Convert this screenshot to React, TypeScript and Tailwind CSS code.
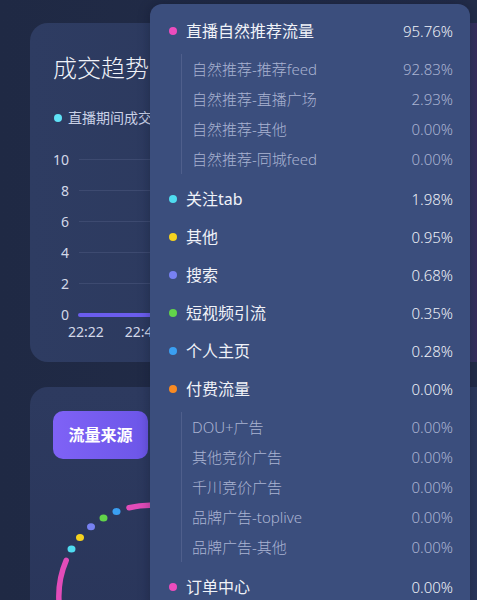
import React from 'react';

type Sub = { name: string; value: string };
type Source = { name: string; value: string; color: string; subs?: Sub[] };

const sources: Source[] = [
  {
    name: '直播自然推荐流量',
    value: '95.76%',
    color: 'bg-[#ec4cbd]',
    subs: [
      { name: '自然推荐-推荐feed', value: '92.83%' },
      { name: '自然推荐-直播广场', value: '2.93%' },
      { name: '自然推荐-其他', value: '0.00%' },
      { name: '自然推荐-同城feed', value: '0.00%' },
    ],
  },
  { name: '关注tab', value: '1.98%', color: 'bg-[#4fdcf0]' },
  { name: '其他', value: '0.95%', color: 'bg-[#f5d21f]' },
  { name: '搜索', value: '0.68%', color: 'bg-[#7781f2]' },
  { name: '短视频引流', value: '0.35%', color: 'bg-[#62d44a]' },
  { name: '个人主页', value: '0.28%', color: 'bg-[#3a9ff2]' },
  {
    name: '付费流量',
    value: '0.00%',
    color: 'bg-[#f98a22]',
    subs: [
      { name: 'DOU+广告', value: '0.00%' },
      { name: '其他竞价广告', value: '0.00%' },
      { name: '千川竞价广告', value: '0.00%' },
      { name: '品牌广告-toplive', value: '0.00%' },
      { name: '品牌广告-其他', value: '0.00%' },
    ],
  },
  { name: '订单中心', value: '0.00%', color: 'bg-[#ec4cbd]' },
];

const yTicks = ['10', '8', '6', '4', '2', '0'];

function TrendCard() {
  return (
    <div className="ml-[30px] mt-[23px] h-[339px] w-[470px] rounded-[18px] bg-[linear-gradient(90deg,#2e3c62_0%,#2b385c_60%,#2d3a60_92%,#3c2c5f_96%)] pl-[23px] pt-[29px]">
      <h2 className="text-[24px] leading-[32px] font-light text-[#f1f3f9]">成交趋势</h2>
      <div className="mt-[24px] flex items-center gap-[6px] text-[14px] leading-[20px] text-[#c9d0e6]">
        <span className="ml-[1px] h-[8px] w-[8px] rounded-full bg-[#5fe2f6]" />
        直播期间成交额
      </div>
      <div className="mt-[16px] w-[390px]">
        {yTicks.map((t) => (
          <div key={t} className="flex h-[31px] items-center">
            <span className="w-[16px] text-right text-[14px] text-[#d3d8e8]">{t}</span>
            {t === '0' ? (
              <div className="ml-[9px] h-[4px] flex-1 rounded-l-full bg-[#6b5ded]" />
            ) : (
              <div className="ml-[10px] h-px flex-1 bg-[#3d4a70]" />
            )}
          </div>
        ))}
      </div>
      <div className="-mt-[9px] flex gap-[21px] pl-[15px] text-[14px] text-[#d3d8e8]">
        <span>22:22</span>
        <span>22:42</span>
      </div>
    </div>
  );
}

function Donut() {
  const dots = [
    { x: 18.5, y: 69.1, c: '#4fdcf0' },
    { x: 27.0, y: 57.5, c: '#f5d21f' },
    { x: 38.0, y: 46.7, c: '#7781f2' },
    { x: 50.5, y: 38.0, c: '#62d44a' },
    { x: 63.5, y: 31.6, c: '#3a9ff2' },
  ];
  return (
    <svg width="200" height="140" viewBox="0 0 200 140" className="mt-[21px] block">
      <path
        d="M76 27.7 A91 91 0 1 1 13.2 80.4"
        fill="none"
        stroke="#e24cb9"
        strokeWidth="5.5"
        strokeLinecap="round"
      />
      {dots.map((d) => (
        <ellipse key={d.c} cx={d.x} cy={d.y} rx="4" ry="3.5" fill={d.c} />
      ))}
    </svg>
  );
}

function SourceCard() {
  return (
    <div className="ml-[30px] mt-[25px] h-[300px] w-[470px] rounded-[18px] bg-[linear-gradient(180deg,#2d3a5f_0%,#29355a_100%)] pl-[23px] pt-[24px]">
      <button className="flex h-[48px] w-[95px] items-center justify-center rounded-[10px] bg-[linear-gradient(90deg,#7f62f6,#6c56e8)] text-[16px] font-bold text-white">
        流量来源
      </button>
      <Donut />
    </div>
  );
}

function SourcePopover() {
  return (
    <div className="absolute left-[150px] top-[4px] w-[320px] rounded-[12px] bg-[#3b4e7d] pb-4 pl-[19px] pr-[17px] pt-[8px] shadow-[0_0_12px_rgba(10,15,35,0.35)]">
      {sources.map((s) => (
        <div key={s.name}>
          <div className="flex h-[38px] items-center">
            <span className={`h-[8px] w-[8px] rounded-full ${s.color}`} />
            <span className="ml-[9px] flex-1 text-[16px] text-[#f0f2f8]">{s.name}</span>
            <span className="text-[15px] font-light text-[#eef1f8]">{s.value}</span>
          </div>
          {s.subs && (
            <div className="mb-[6px] ml-[12px] mt-[4px] border-l border-[#4f5f8c] pl-[10px]">
              {s.subs.map((sub) => (
                <div key={sub.name} className="flex h-[30px] items-center text-[15px] font-light text-[#aab3d2]">
                  <span className="flex-1">{sub.name}</span>
                  <span>{sub.value}</span>
                </div>
              ))}
            </div>
          )}
        </div>
      ))}
    </div>
  );
}

export default function App() {
  return (
    <div className="relative h-[600px] w-[477px] overflow-hidden bg-[linear-gradient(90deg,#1f2944_0%,#232d4a_100%)] font-['Noto_Sans','Noto_Sans_CJK_SC',sans-serif]">
      <TrendCard />
      <SourceCard />
      <SourcePopover />
    </div>
  );
}
